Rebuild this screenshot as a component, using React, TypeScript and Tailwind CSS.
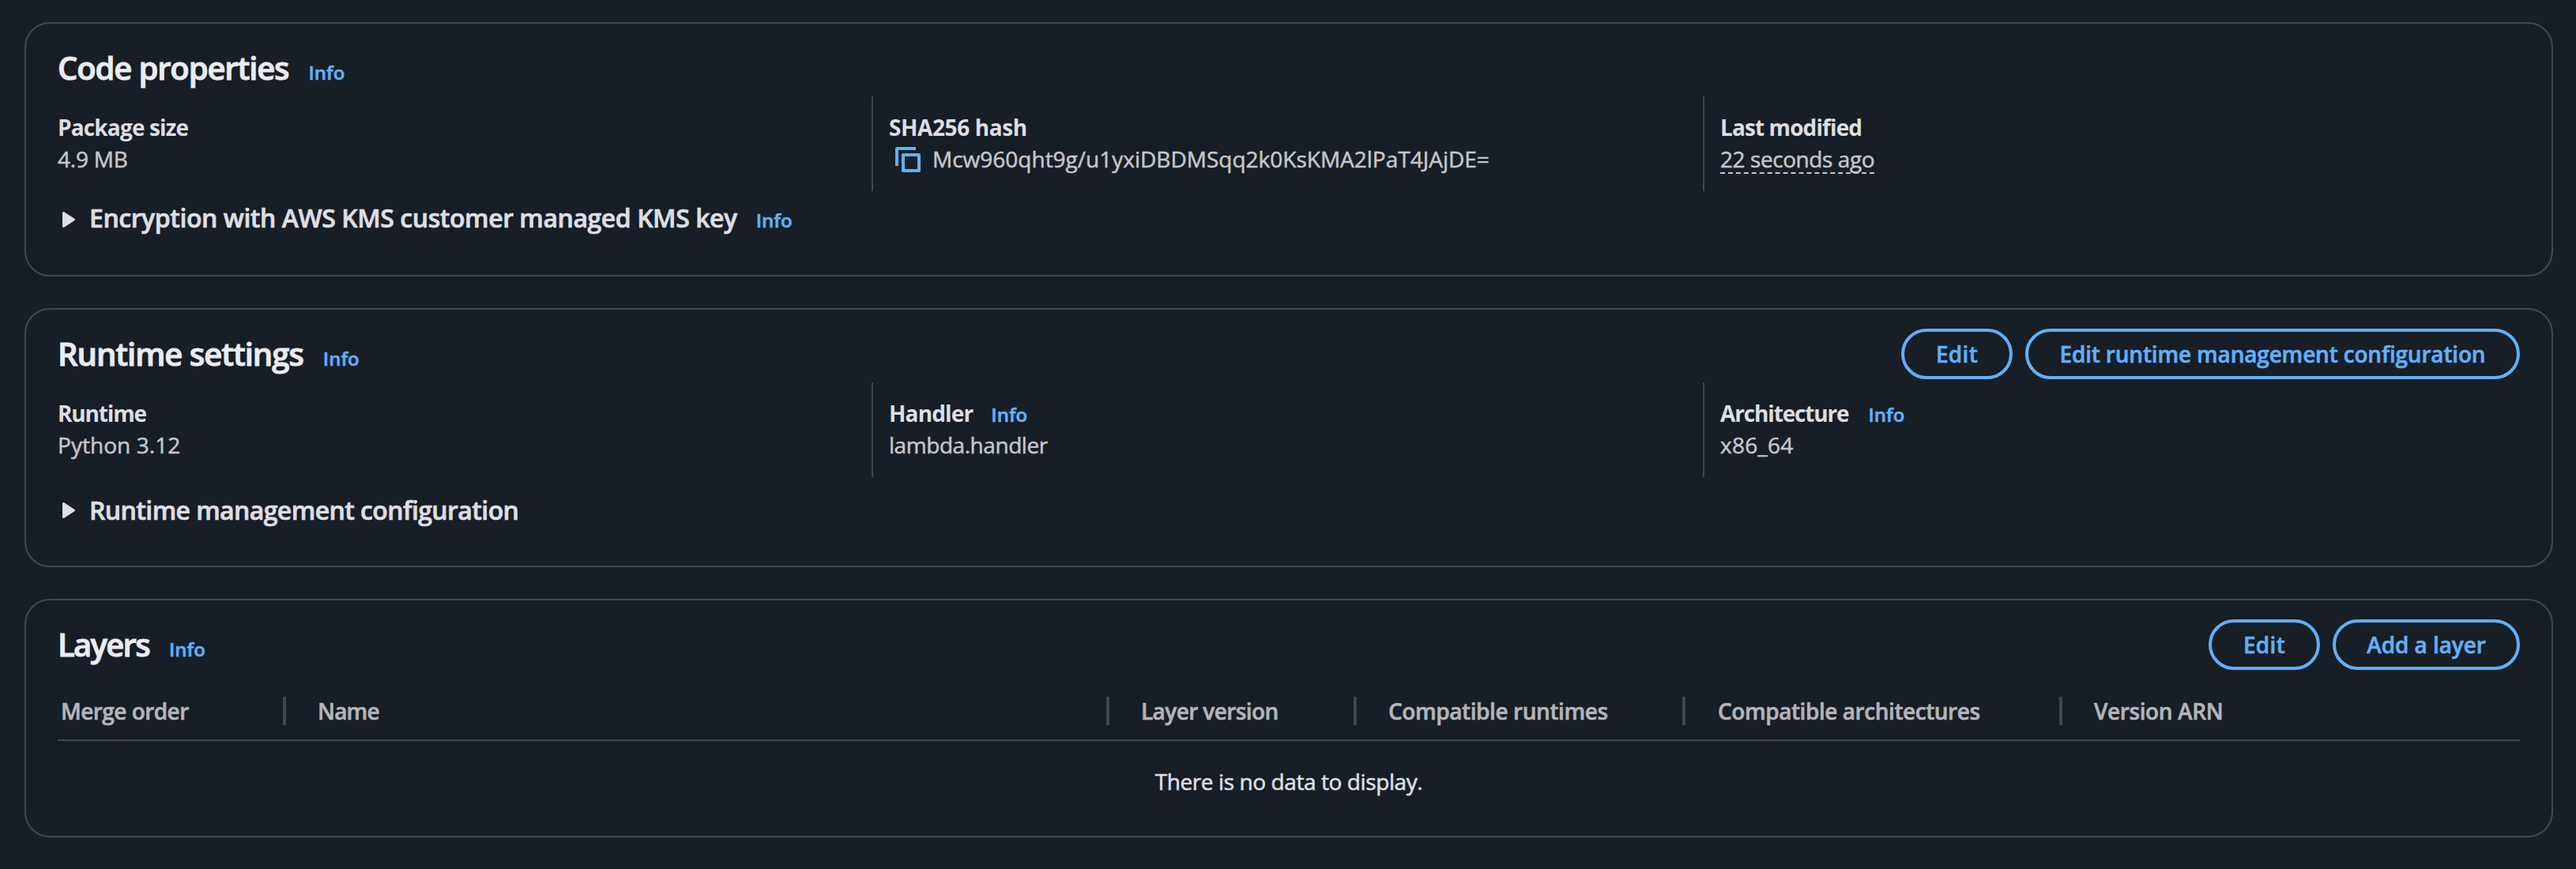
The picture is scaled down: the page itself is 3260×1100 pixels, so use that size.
import React from "react";

function Card({ className, children }: { className: string; children: React.ReactNode }) {
  return (
    <section className={`w-[3200px] rounded-[32px] border-2 border-[#43464f] px-10 ${className}`}>
      {children}
    </section>
  );
}

function Info({ className = "ml-6" }: { className?: string }) {
  return (
    <a
      className={`cursor-pointer text-[24px] font-semibold text-[#60b0fa] [-webkit-text-stroke:0.6px] ${className}`}
    >
      Info
    </a>
  );
}

function Header({
  title,
  tracking,
  children,
}: {
  title: string;
  tracking: string;
  children?: React.ReactNode;
}) {
  return (
    <header className="flex h-[92px] items-center justify-between pt-5">
      <div className="flex items-baseline pt-[6px] leading-[48px]">
        <h2
          className={`text-[40px] font-semibold text-[#ebebf0] [-webkit-text-stroke:1px] ${tracking}`}
        >
          {title}
        </h2>
        <Info className="ml-[25px]" />
      </div>
      <div className="flex gap-4">{children}</div>
    </header>
  );
}

function Button({ className, children }: { className: string; children: React.ReactNode }) {
  return (
    <button
      className={`flex h-16 items-center justify-center whitespace-nowrap rounded-[40px] border-4 border-[#60b0fa] text-[28px] font-semibold leading-10 text-[#60b0fa] [-webkit-text-stroke:0.6px] ${className}`}
    >
      {children}
    </button>
  );
}

function Columns({ children }: { children: React.ReactNode }) {
  return <div className="-ml-[22px] -mr-[18px] grid h-[120px] grid-cols-3">{children}</div>;
}

function Field({
  label,
  tracking,
  info,
  first,
  children,
}: {
  label: string;
  tracking: string;
  info?: string;
  first?: boolean;
  children: React.ReactNode;
}) {
  return (
    <div
      className={`border-l-2 pl-5 pt-[19px] text-[28px] leading-10 ${
        first ? "border-transparent" : "border-[#43464f]"
      }`}
    >
      <div className="flex h-10 items-baseline">
        <span className={`font-bold text-[#dedee3] ${tracking}`}>{label}</span>
        {info && <Info className={info} />}
      </div>
      <div className="flex h-10 text-[#c6c6cd] [-webkit-text-stroke:0.5px]">{children}</div>
    </div>
  );
}

function Expander({
  title,
  tracking,
  className,
  info,
}: {
  title: string;
  tracking: string;
  className: string;
  info?: boolean;
}) {
  return (
    <div className={`ml-1.5 flex items-center ${className}`}>
      <svg width="16" height="20" viewBox="0 0 16 20" fill="#dedee3">
        <path d="M0 1.6C0 .3 1.4-.4 2.5.4l12.7 8.4c.9.6.9 1.8 0 2.4L2.5 19.6C1.4 20.4 0 19.7 0 18.4z" />
      </svg>
      <div className="ml-[18px] flex items-baseline leading-10">
        <h3
          className={`text-[32px] font-semibold text-[#dedee3] [-webkit-text-stroke:0.7px] ${tracking}`}
        >
          {title}
        </h3>
        {info && <Info />}
      </div>
    </div>
  );
}

function CopyIcon() {
  return (
    <svg
      className="ml-2 mr-[15px] mt-[5px]"
      width="32"
      height="32"
      viewBox="0 0 32 32"
      fill="none"
      stroke="#60b0fa"
      strokeWidth="4"
      strokeLinejoin="round"
    >
      <path d="M26 2H2v22" />
      <path d="M10 10h20v20H10z" />
    </svg>
  );
}

const columns = [
  { label: "Merge order", cell: "w-[289px] pl-1", tracking: "tracking-[-0.55px]" },
  { label: "Name", cell: "w-[1042px] pl-10", tracking: "tracking-[-0.8px]" },
  { label: "Layer version", cell: "w-[313px] pl-10", tracking: "tracking-[-0.6px]" },
  { label: "Compatible runtimes", cell: "w-[416px] pl-10", tracking: "tracking-[-0.43px]" },
  { label: "Compatible architectures", cell: "w-[477px] pl-[41px]", tracking: "tracking-[-0.45px]" },
  { label: "Version ARN", cell: "flex-1 pl-10", tracking: "tracking-[-0.4px]" },
];

export default function App() {
  return (
    <main className="flex h-[1100px] w-[3260px] flex-col gap-10 overflow-hidden bg-[#171e25] pl-[31px] pt-7 font-['Open_Sans','Noto_Sans',sans-serif]">
      <Card className="h-[322px]">
        <Header title="Code properties" tracking="tracking-[-1.13px]" />
        <Columns>
          <Field label="Package size" tracking="tracking-[-0.85px]" first>
            <span className="tracking-[-0.2px]">4.9 MB</span>
          </Field>
          <Field label="SHA256 hash" tracking="tracking-[-0.4px]">
            <CopyIcon />
            <span>Mcw960qht9g/u1yxiDBDMSqq2k0KsKMA2lPaT4JAjDE=</span>
          </Field>
          <Field label="Last modified" tracking="tracking-[-0.9px]">
            <span className="h-[39px] border-b-2 border-dashed border-[#c6c6cd] tracking-[-0.43px]">
              22 seconds ago
            </span>
          </Field>
        </Columns>
        <Expander
          className="mt-[14px]"
          title="Encryption with AWS KMS customer managed KMS key"
          tracking="tracking-[-0.45px]"
          info
        />
      </Card>

      <Card className="h-[328px]">
        <Header title="Runtime settings" tracking="tracking-[-1.03px]">
          <Button className="w-[141px] tracking-[0.3px]">Edit</Button>
          <Button className="w-[626px] tracking-[-0.18px]">
            Edit runtime management configuration
          </Button>
        </Header>
        <Columns>
          <Field label="Runtime" tracking="tracking-[-1.15px]" first>
            <span className="tracking-[0.05px]">Python 3.12</span>
          </Field>
          <Field label="Handler" tracking="tracking-[-0.85px]" info="ml-[23px]">
            <span className="tracking-[-0.45px]">lambda.handler</span>
          </Field>
          <Field label="Architecture" tracking="tracking-[-1.15px]" info="ml-[25px]">
            <span className="tracking-[0.25px]">x86_64</span>
          </Field>
        </Columns>
        <Expander
          className="mt-[22px]"
          title="Runtime management configuration"
          tracking="tracking-[-0.6px]"
        />
      </Card>

      <Card className="h-[302px]">
        <Header title="Layers" tracking="tracking-[-1.7px]">
          <Button className="w-[141px] tracking-[0.3px]">Edit</Button>
          <Button className="w-[237px] tracking-[-0.08px]">Add a layer</Button>
        </Header>
        <div className="flex h-[86px] border-b-2 border-[#43464f] pt-3 text-[28px] font-semibold leading-10 text-[#b4b4bb] [-webkit-text-stroke:0.6px]">
          {columns.map((c, i) => (
            <div key={c.label} className={`flex items-center justify-between ${c.cell}`}>
              <span className={c.tracking}>{c.label}</span>
              {i < columns.length - 1 && <span className="h-9 w-1 bg-[#43464f]" />}
            </div>
          ))}
        </div>
        <p className="pt-[31px] text-center text-[28px] leading-10 tracking-[-0.41px] text-[#dedee3] [-webkit-text-stroke:0.6px]">
          There is no data to display.
        </p>
      </Card>
    </main>
  );
}
